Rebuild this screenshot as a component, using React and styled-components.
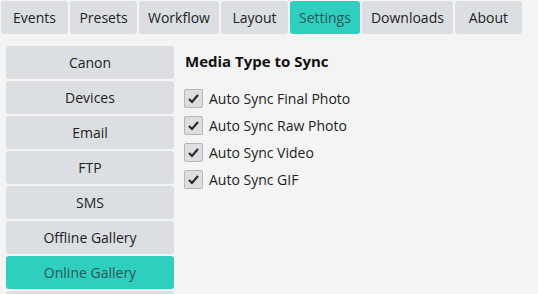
import React, { useState } from "react";
import styled, { createGlobalStyle } from "styled-components";

const Global = createGlobalStyle`
  html, body { margin: 0; padding: 0; background: #f4f4f4; }
  body { font-family: "Open Sans", "Noto Sans", sans-serif; color: #222; }
  * { box-sizing: border-box; }
`;

const Page = styled.div`
  width: 538px;
  height: 294px;
  overflow: hidden;
  background: #f4f4f4;
  padding: 1px 0 0 1px;
`;

const TabBar = styled.div`
  display: flex;
  gap: 2px;
`;

const Tab = styled.div`
  height: 33px;
  min-width: 67px;
  padding: 0 9px;
  display: flex;
  align-items: center;
  justify-content: center;
  border-radius: 3px;
  font-size: 14px;
  background: ${(p) => (p.$active ? "#2ecfbf" : "#dcdfe2")};
  color: ${(p) => (p.$active ? "#2d5552" : "#222")};
`;

const Body = styled.div`
  display: flex;
  padding: 12px 0 0 5px;
`;

const Sidebar = styled.div`
  display: flex;
  flex-direction: column;
  gap: 2px;
  width: 168px;
`;

const SideItem = styled.div`
  height: 33px;
  flex-shrink: 0;
  display: flex;
  align-items: center;
  justify-content: center;
  border-radius: 3px;
  font-size: 14px;
  background: ${(p) => (p.$active ? "#2ecfbf" : "#dcdfe2")};
  color: ${(p) => (p.$active ? "#2d5552" : "#222")};
`;

const Content = styled.div`
  padding: 4px 0 0 10px;
  display: flex;
  flex-direction: column;
`;

const Heading = styled.div`
  font-size: 15px;
  font-weight: 700;
  color: #111;
  height: 22px;
  line-height: 22px;
  margin-bottom: 17px;
  padding-left: 1px;
`;

const Options = styled.div`
  display: flex;
  flex-direction: column;
  gap: 8px;
`;

const Row = styled.label`
  display: flex;
  align-items: center;
  gap: 6px;
  font-size: 14px;
  color: #222;
  height: 19px;
`;

const Box = styled.span`
  width: 19px;
  height: 19px;
  border: 1px solid #b4b6b8;
  border-radius: 2px;
  background: #dcdfe2;
  display: flex;
  align-items: center;
  justify-content: center;
`;

const Check = () => (
  <svg width="13" height="11" viewBox="0 0 13 11">
    <path d="M2 6 L5 9 L11 2" stroke="#2a2a2a" strokeWidth="2.2" fill="none" />
  </svg>
);

const tabs = ["Events", "Presets", "Workflow", "Layout", "Settings", "Downloads", "About"];
const side = ["Canon", "Devices", "Email", "FTP", "SMS", "Offline Gallery", "Online Gallery", "More"];
const options = ["Auto Sync Final Photo", "Auto Sync Raw Photo", "Auto Sync Video", "Auto Sync GIF"];

export default function App() {
  const [active] = useState("Settings");
  return (
    <Page>
      <Global />
      <TabBar>
        {tabs.map((t) => (
          <Tab key={t} $active={t === active}>{t}</Tab>
        ))}
      </TabBar>
      <Body>
        <Sidebar>
          {side.map((s) => (
            <SideItem key={s} $active={s === "Online Gallery"}>{s}</SideItem>
          ))}
        </Sidebar>
        <Content>
          <Heading>Media Type to Sync</Heading>
          <Options>
            {options.map((o) => (
              <Row key={o}>
                <Box><Check /></Box>
                {o}
              </Row>
            ))}
          </Options>
        </Content>
      </Body>
    </Page>
  );
}
